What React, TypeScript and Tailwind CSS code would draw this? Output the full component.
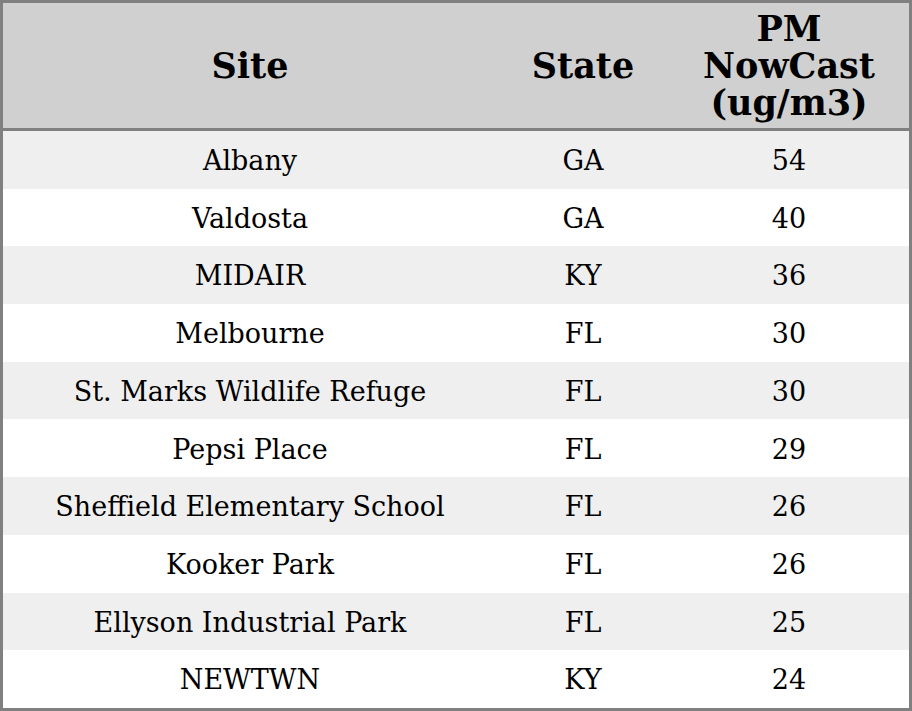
import React from "react";

const rows: [string, string, number][] = [
  ["Albany", "GA", 54],
  ["Valdosta", "GA", 40],
  ["MIDAIR", "KY", 36],
  ["Melbourne", "FL", 30],
  ["St. Marks Wildlife Refuge", "FL", 30],
  ["Pepsi Place", "FL", 29],
  ["Sheffield Elementary School", "FL", 26],
  ["Kooker Park", "FL", 26],
  ["Ellyson Industrial Park", "FL", 25],
  ["NEWTWN", "KY", 24],
];

export default function App() {
  return (
    <div className="w-[912px] h-[711px] bg-white font-['DejaVu_Serif',serif] text-black">
      <div className="w-[912px] h-[711px] border-[3px] border-[#808080] flex flex-col">
        <div className="grid grid-cols-[494px_172px_240px] h-[128px] shrink-0 bg-[#d0d0d0] border-b-[3px] border-[#808080] font-bold text-[35px] leading-[37px]">
          <div className="flex items-center justify-center">Site</div>
          <div className="flex items-center justify-center">State</div>
          <div className="flex items-center justify-center text-center">
            PM
            <br />
            NowCast
            <br />
            (ug/m3)
          </div>
        </div>
        {rows.map(([site, state, value], i) => (
          <div
            key={site}
            className={`grid grid-cols-[494px_172px_240px] h-[57.7px] pt-[3px] text-[27px] ${
              i % 2 === 0 ? "bg-[#efefef]" : "bg-white"
            }`}
          >
            <div className="flex items-center justify-center">{site}</div>
            <div className="flex items-center justify-center">{state}</div>
            <div className="flex items-center justify-center">{value}</div>
          </div>
        ))}
      </div>
    </div>
  );
}
